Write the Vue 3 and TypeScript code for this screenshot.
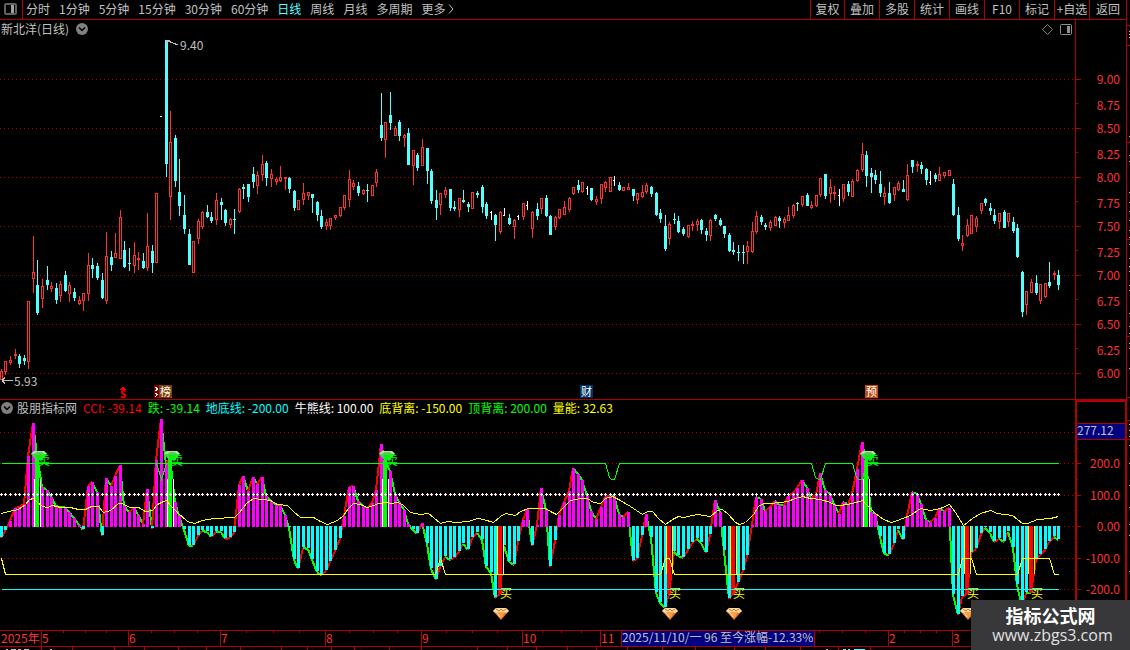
<script setup lang="ts">
interface Candle {
  x: number
  high: number
  top: number
  bottom: number
  low: number
  kind: string
}
interface Point {
  x: number
  y: number
}

const periods: string[] = ['分时', '1分钟', '5分钟', '15分钟', '30分钟', '60分钟', '日线', '周线', '月线', '多周期', '更多']
const tools: string[] = ['复权', '叠加', '多股', '统计', '画线', 'F10', '标记', '+自选', '返回']

// x, high, body top, body bottom, low, kind (r = up, c = down, w = flat)
const candleRows = `
1 369 371 380 380 r|5 361 361 372 375 r|10 356 360 363 365 r|15 349 354 356 359 r|19 354 356 364 368 c|24 355 358 361 365 c
28 301 301 362 369 r|33 236 272 279 293 r|37 260 285 313 315 c|42 279 286 299 308 r|47 266 280 285 290 c|51 282 286 289 292 r
56 283 288 300 304 c|60 281 284 296 302 r|65 271 275 291 292 c|69 282 285 294 302 r|74 288 292 298 301 c|79 296 300 304 305 r
83 293 293 301 311 r|88 253 265 294 301 r|92 258 265 269 278 c|97 263 266 278 280 c|102 273 280 298 299 c|106 232 256 301 304 r
111 251 257 265 271 c|115 233 253 258 258 r|120 210 217 259 259 r|124 241 250 267 268 c|129 248 263 264 271 c|134 242 255 266 273 r
138 252 258 260 270 r|143 253 261 268 269 c|147 213 246 268 271 r|152 245 251 263 273 c|156 193 193 263 263 r|161 116 116 117 117 w
166 40 40 164 177 c|170 111 142 197 220 r|175 135 138 181 187 c|179 159 192 206 216 c|184 195 215 229 234 c|189 229 234 265 265 c
193 241 241 273 273 r|198 219 221 239 244 r|202 211 212 227 229 r|207 205 212 217 218 c|211 212 217 221 223 c|216 193 200 220 225 r
221 198 202 205 220 c|225 209 210 223 226 c|230 218 219 225 228 r|234 209 219 220 234 c|239 188 189 212 213 r|243 184 187 189 199 c
248 184 184 197 202 c|253 167 174 182 188 c|257 171 175 186 194 r|262 155 164 175 181 r|266 161 163 178 186 c|271 169 174 179 187 r
276 177 179 182 185 r|280 166 177 181 182 r|285 177 177 179 190 r|289 177 178 189 193 c|294 190 191 208 211 c|298 200 200 210 210 r
303 183 193 200 205 r|308 192 192 196 200 r|312 194 194 198 213 c|317 201 202 215 221 c|321 210 216 227 229 c|326 219 222 226 230 r
330 218 218 226 230 r|335 215 215 218 220 r|340 207 207 216 217 r|344 195 195 208 210 r|349 170 179 200 207 r|353 180 183 187 190 r
358 182 186 193 196 c|363 189 190 194 195 r|367 184 190 191 202 c|372 185 185 196 196 r|376 169 172 183 187 r|381 93 125 138 141 c
385 122 122 140 158 r|390 92 115 123 130 c|395 126 128 136 136 r|399 120 122 136 141 c|404 134 135 138 147 r|408 128 133 165 165 c
413 150 150 166 185 r|417 153 155 168 171 c|422 139 147 166 166 r|427 148 148 171 184 c|431 169 171 201 204 c|436 190 200 208 220 c
440 193 193 205 215 r|445 187 190 195 198 r|450 189 189 208 211 c|454 201 207 209 211 c|459 198 198 210 217 r|463 190 200 202 203 c
468 202 204 207 212 c|472 192 192 209 209 r|477 191 193 195 198 c|482 185 187 207 213 c|486 202 204 216 219 c|491 211 212 213 220 w
495 214 215 225 241 c|500 211 212 232 234 r|504 208 215 216 216 w|509 214 218 224 225 c|514 219 220 227 239 r|518 215 216 217 220 w
523 203 203 217 220 r|527 201 205 206 210 w|532 211 212 229 238 r|537 203 209 216 220 c|541 198 198 209 214 r|546 195 198 216 217 c
550 215 216 235 235 c|555 216 217 227 230 r|559 209 209 218 219 r|564 201 207 215 215 r|569 197 198 210 212 r|573 187 187 194 195 r
578 180 185 190 193 c|582 182 182 192 193 r|587 186 188 189 195 w|591 188 188 200 201 c|596 196 199 202 205 r|601 184 184 199 204 r
605 181 182 188 192 r|610 177 177 192 192 r|614 176 180 181 186 w|619 182 185 190 191 c|623 187 187 191 191 r|628 183 187 190 190 r
633 189 189 196 201 c|637 193 193 200 204 r|642 185 192 197 198 r|646 183 185 192 194 r|651 186 187 194 197 c|656 192 193 215 216 c
660 209 213 219 223 c|665 215 226 249 251 c|669 222 224 239 245 r|674 213 219 220 224 c|678 216 221 232 233 c|683 227 229 234 236 c
688 225 225 237 238 r|692 221 224 226 231 r|697 219 221 225 231 r|701 219 220 230 234 c|706 228 231 235 241 c|710 219 220 236 241 r
715 214 215 219 221 c|720 218 220 225 226 c|724 226 226 234 238 c|729 233 235 251 252 c|733 242 250 252 255 c|738 245 252 253 261 c
743 245 252 253 264 c|747 241 246 252 264 r|752 222 231 252 253 r|756 211 216 232 234 r|761 215 217 222 225 c|765 223 225 227 230 c
770 220 222 228 231 r|775 216 217 226 226 r|779 216 218 221 228 c|784 217 219 223 228 r|788 207 215 221 221 r|793 204 205 216 218 r
797 202 203 204 211 c|802 196 196 205 207 r|807 193 195 206 206 c|811 201 205 208 209 r|816 195 195 206 207 r|820 178 178 195 197 r
825 174 174 196 199 c|830 179 187 194 203 r|834 186 192 194 200 r|839 189 195 196 206 w|843 184 184 199 202 r|848 181 184 192 196 c
852 179 181 197 197 r|857 169 170 181 182 r|862 143 154 170 172 r|866 151 155 176 187 c|871 168 173 177 193 c|875 170 175 180 184 c
880 171 184 193 197 c|884 187 193 197 205 r|889 182 193 203 204 c|894 187 187 195 201 r|898 181 183 190 191 r|903 180 189 192 192 c
907 164 175 200 201 r|912 160 160 167 173 c|917 161 164 166 172 r|921 162 165 169 174 c|926 168 169 180 185 c|930 171 182 183 185 w
935 173 175 179 182 c|939 167 174 181 181 r|944 172 172 176 178 r|949 170 170 176 176 r|953 179 184 215 216 c|958 207 215 239 241 c
962 235 243 246 251 r|967 219 225 236 237 r|971 215 215 234 234 r|976 216 218 227 232 r|981 203 203 211 214 r|985 198 199 203 206 c
990 203 208 211 215 c|994 209 215 221 224 c|999 213 213 222 229 r|1004 210 212 228 228 c|1008 213 213 222 227 r|1013 217 222 231 233 c
1017 224 228 257 258 c|1022 271 272 312 317 c|1026 291 291 305 315 r|1031 279 282 293 293 r|1036 275 283 293 295 c|1040 284 284 301 304 r
1045 283 283 297 298 r|1049 262 282 286 288 c|1054 271 273 275 280 r|1058 270 275 285 290 c`

const candles: Candle[] = candleRows
  .trim()
  .split(/[|\n]/)
  .map((row) => {
    const [x, high, top, bottom, low, kind] = row.split(' ')
    return { x: +x, high: +high, top: +top, bottom: +bottom, low: +low, kind }
  })

const parsePoints = (text: string): Point[] =>
  text
    .trim()
    .split(/\s+/)
    .map((pair) => {
      const [x, y] = pair.split(',').map(Number)
      return { x, y }
    })

const cci: Point[] = parsePoints(`
1,538 5,531 10,521 15,508 19,507 24,504 28,456 33,423 37,455 42,487 47,490 51,497 56,506 60,507 65,507 69,512 74,518 79,525
83,530 88,486 92,482 97,492 102,536 106,478 111,486 115,476 120,465 124,506 129,512 134,508 138,515 143,524 147,489 152,529
156,460 161,419 166,464 170,458 175,502 179,516 184,530 189,546 193,546 198,536 202,531 207,532 211,537 216,532 221,532
225,539 230,538 234,533 239,485 243,476 248,491 253,477 257,484 262,477 266,496 271,501 276,505 280,505 285,515 289,528
294,560 298,569 303,548 308,549 312,560 317,572 321,575 326,571 330,562 335,551 340,539 344,516 349,487 353,486 358,501
363,506 367,508 372,503 376,490 381,444 385,460 390,471 395,494 399,502 404,510 408,524 413,530 417,534 422,523 427,544
431,569 436,580 440,567 445,557 450,560 454,558 459,552 463,544 468,550 472,538 477,533 482,540 486,567 491,573 495,598
500,594 504,546 509,562 514,565 518,542 523,520 527,509 532,546 537,525 541,488 546,510 550,567 555,541 559,515 564,502
569,491 573,468 578,474 582,480 587,496 591,511 596,519 601,507 605,497 610,495 614,496 619,514 623,517 628,512 633,561
637,559 642,536 646,514 651,538 656,593 660,603 665,608 669,594 674,552 678,556 683,558 688,550 692,543 697,539 701,543
706,553 710,535 715,500 720,512 724,551 729,599 733,594 738,583 743,571 747,556 752,525 756,497 761,499 765,511 770,507
775,501 779,505 784,505 788,496 793,493 797,488 802,480 807,488 811,498 816,495 820,473 825,490 830,494 834,504 839,514
843,502 848,504 852,494 857,469 862,442 866,460 871,512 875,514 880,537 884,554 889,555 894,544 898,530 903,540 907,516
912,492 917,494 921,504 926,520 930,522 935,518 939,509 944,511 949,508 953,595 958,615 962,597 967,594 971,553 976,549
981,534 985,528 990,533 994,542 999,539 1004,542 1008,532 1013,548 1017,585 1022,607 1026,593 1031,593 1036,560 1040,555
1045,550 1049,542 1054,537 1058,540`)

const volume = `1,513 8,511 18,509 25,504 29,499 33,498 37,502 42,506 47,507 52,505 60,507 70,507 78,509 85,509 91,506 98,506 103,512
110,510 118,503 121,503 130,507 138,507 145,511 152,510 157,504 163,501 166,500 170,505 178,513 187,521 194,523 202,520 214,518
234,517 239,512 246,503 253,498 262,499 270,500 277,504 287,505 293,511 300,517 313,517 320,521 327,524 337,520 343,515 348,508
353,503 360,504 367,507 373,505 378,503 385,502 390,503 398,502 403,505 410,512 420,514 428,513 433,517 440,523 447,521 455,522
468,521 477,518 483,519 493,522 500,516 505,513 515,515 520,511 528,508 545,508 550,511 556,514 562,508 570,500 580,498 587,498
593,502 600,503 605,498 612,496 618,499 630,506 642,514 647,511 652,511 658,518 665,524 672,519 678,516 683,517 697,514 710,516
717,510 722,509 728,514 735,522 739,524 745,522 753,514 758,506 763,503 770,503 780,502 787,501 795,498 802,496 810,498 820,499
830,502 835,505 840,505 852,503 862,500 868,506 875,513 883,519 891,522 897,520 910,515 920,508 930,510 940,508 949,504 955,512
963,525 972,518 980,513 990,510 997,513 1012,515 1022,523 1027,523 1037,519 1050,518 1058,516`

const topLine = '1,463 605,463 609,477 611,479 614,479 619,463 811,463 815,477 818,479 820,479 825,463 852,463 856,477 858,479 862,479 866,463 1058,463'
const bottomLine = '1,558 5,574 435,574 440,558 445,574 660,574 665,558 669,558 674,574 958,574 962,558 971,558 976,574 1017,574 1022,558 1049,558 1054,574 1058,574'

const sells: number[] = [37, 170, 385, 866]
const buys: number[] = [500, 669, 733, 967, 1031]
const signals = new Set<number>([...sells, ...buys])
const bars = cci.filter((p) => !signals.has(p.x))
const segments = cci.slice(1).map((p, i) => ({ x1: cci[i].x, y1: cci[i].y, x2: p.x, y2: p.y, up: p.y < cci[i].y }))
const levelOf = (x: number): number => cci.find((p) => p.x === x)?.y ?? 526

const priceGrid: number[] = [79, 128, 177, 226, 275, 324, 373]
const cciGrid: number[] = [432, 463, 495, 526, 558, 589]
const prices = [
  ['9.00', 79], ['8.75', 105], ['8.50', 128], ['8.25', 154], ['8.00', 177], ['7.75', 203], ['7.50', 226],
  ['7.25', 252], ['7.00', 275], ['6.75', 301], ['6.50', 324], ['6.25', 350], ['6.00', 373],
] as [string, number][]
const levels = [['200.0', 463], ['100.0', 495], ['0.00', 526], ['-100.0', 558], ['-200.0', 589]] as [string, number][]

const readings = [
  { text: 'CCI: -39.14', tone: 'red' },
  { text: '跌: -39.14', tone: 'green' },
  { text: '地底线: -200.00', tone: 'aqua' },
  { text: '牛熊线: 100.00', tone: 'white' },
  { text: '底背离: -150.00', tone: 'yellow' },
  { text: '顶背离: 200.00', tone: 'green' },
  { text: '量能: 32.63', tone: 'yellow' },
]

const months = [['5', 41], ['6', 128], ['7', 220], ['8', 325], ['9', 421], ['10', 522], ['11', 600], ['2', 888], ['3', 952]] as [string, number][]
const minorTicks: number[] = [63, 85, 106, 151, 174, 197, 246, 273, 299, 349, 373, 397, 446, 472, 497, 542, 561, 581, 819, 842, 865, 904, 920, 936]
const lowerTicks: number[] = [41, 72, 114, 144, 178, 206, 240, 281, 307, 331, 354, 389, 421, 477, 507, 536, 567, 596, 627, 662, 695, 734, 765, 800, 838, 870]
const railLines: number[] = [25, 45, 142, 239, 336, 397, 420, 439]
const railDots: number[] = [31, 34, 37, 136, 155, 161, 192, 202, 211, 220, 230, 237, 244, 258, 266, 271, 285, 290, 313, 326, 333, 343, 348, 368, 424, 430, 436, 445, 463, 485, 507, 524, 535, 571]
</script>

<template>
  <div class="terminal">
    <main class="main">
      <nav class="toolbar">
        <button class="panel-toggle" aria-label="panel">
          <svg width="13" height="12" viewBox="0 0 13 12">
            <rect x="1" y="1" width="11" height="10" rx="1" fill="none" stroke="#606060" stroke-width="2" />
            <rect x="7" y="2" width="3" height="8" fill="#a0a0a0" />
          </svg>
        </button>
        <div class="periods">
          <button v-for="p in periods" :key="p" :class="{ active: p === '日线' }">
            {{ p }}<svg v-if="p === '更多'" class="more" width="6" height="10" viewBox="0 0 6 10"><path d="M1 0.5L5 5L1 9.5" fill="none" stroke="#c0c0c0" /></svg>
          </button>
        </div>
        <div class="tools">
          <button v-for="t in tools" :key="t">{{ t }}</button>
        </div>
      </nav>

      <header class="price-head">
        <div class="caption">
          <span>新北洋(日线)</span>
          <button aria-label="menu">
            <svg width="12" height="12" viewBox="0 0 12 12"><circle cx="6" cy="6" r="6" fill="#808080" /><path d="M3 4.5L6 7.5L9 4.5" fill="none" stroke="#000" stroke-width="1.5" /></svg>
          </button>
          <div class="corner">
            <button aria-label="diamond">
              <svg width="11" height="11" viewBox="0 0 11 11"><path d="M5.5 0.5L10.5 5.5L5.5 10.5L0.5 5.5Z" fill="none" stroke="#808080" /></svg>
            </button>
            <button aria-label="side panel">
              <svg width="12" height="11" viewBox="0 0 12 11">
                <rect x="0.5" y="0.5" width="11" height="10" rx="1" fill="none" stroke="#909090" />
                <rect x="7" y="2" width="3" height="7" fill="#909090" />
              </svg>
            </button>
          </div>
        </div>
        <div class="axis-cap"></div>
      </header>

      <svg class="chart" viewBox="0 38 1126 362" shape-rendering="crispEdges">
        <line v-for="y in priceGrid" :key="y" class="grid" x1="0" x2="1075" :y1="y + 0.5" :y2="y + 0.5" />
        <g v-for="c in candles" :key="c.x" :class="'candle-' + c.kind">
          <template v-if="c.kind === 'r'">
            <rect :x="c.x" :y="c.high" width="1" :height="c.top - c.high" />
            <rect :x="c.x - 1" :y="c.top" width="3" :height="c.bottom - c.top" />
            <rect v-if="c.bottom - c.top > 2" class="hollow" :x="c.x" :y="c.top + 1" width="1" :height="c.bottom - c.top - 2" />
            <rect :x="c.x" :y="c.bottom" width="1" :height="c.low - c.bottom" />
          </template>
          <template v-else>
            <rect :x="c.x" :y="c.high" width="1" :height="c.low - c.high" />
            <rect :x="c.x - 1" :y="c.top" :width="c.kind === 'w' ? 2 : 3" :height="c.bottom - c.top" />
          </template>
        </g>
        <path d="M166 40l4 0M166 40l0 4M168 41l10 4M2 380.5h11M2 380.5l3 -3M2 380.5l3 3" fill="none" stroke="#c0c0c0" />
        <text class="note" x="180" y="50">9.40</text>
        <text class="note" x="14" y="386">5.93</text>

        <path d="M119 390l4 -3l4 3z" fill="#f00" />
        <text class="dollar" x="123" y="398">S</text>
        <rect x="154" y="385" width="5" height="13" fill="#800000" />
        <path d="M155 387l3 2M155 391l3 -2M155 393l3 2M155 397l3 -3" stroke="#fff" fill="none" />
        <rect x="159" y="385" width="13" height="13" fill="#804000" />
        <rect x="580" y="385" width="13" height="13" fill="#003468" />
        <rect x="865" y="385" width="13" height="13" fill="#bc4a10" />
        <text class="tag" x="160" y="396">榜</text>
        <text class="tag" x="581" y="396">财</text>
        <text class="tag" x="866" y="396">预</text>

        <g class="rule">
          <rect x="1075" y="38" width="1" height="362" />
          <rect v-for="([label, y], i) in prices" :key="label" x="1076" :y="i % 2 ? y - 2 : y" :width="i % 2 ? 2 : 5" height="1" />
          <rect x="0" y="399" width="1126" height="1" />
        </g>
        <text v-for="[label, y] in prices" :key="label" class="scale" x="1120" :y="y + 5">{{ label }}</text>
      </svg>

      <header class="cci-head">
        <div class="caption">
          <button aria-label="indicator menu">
            <svg width="12" height="12" viewBox="0 0 12 12"><circle cx="6" cy="6" r="6" fill="#808080" /><path d="M3 4.5L6 7.5L9 4.5" fill="none" stroke="#000" stroke-width="1.5" /></svg>
          </button>
          <span>股朋指标网</span>
          <span v-for="r in readings" :key="r.text" :class="r.tone">{{ r.text }}</span>
        </div>
        <div class="axis-cap boxed"></div>
      </header>

      <svg class="chart" viewBox="0 418 1126 212" shape-rendering="crispEdges">
        <line v-for="y in cciGrid" :key="y" class="grid" x1="0" x2="1075" :y1="y + 0.5" :y2="y + 0.5" />
        <line v-for="s in segments" :key="s.x2" class="cci" :class="{ up: s.up }" :x1="s.x1" :y1="s.y1" :x2="s.x2" :y2="s.y2" />
        <rect
          v-for="b in bars"
          :key="b.x"
          :fill="b.y < 526 ? '#ff00ff' : '#00ffff'"
          :x="b.x - 1"
          :y="Math.min(b.y, 526)"
          width="3"
          :height="Math.abs(527 - b.y)"
        />
        <g v-for="x in sells" :key="x">
          <rect :x="x - 3" y="479" width="7" height="48" fill="#fff" />
          <rect :x="x - 2" y="479" width="5" height="48" fill="#000" />
          <rect :x="x - 2" :y="levelOf(x)" width="4" :height="527 - levelOf(x)" fill="#00ff00" />
        </g>
        <g v-for="x in buys" :key="x">
          <rect :x="x - 3" y="526" width="7" height="48" fill="#ffff00" />
          <rect :x="x - 2" y="526" width="5" height="48" fill="#000" />
          <rect :x="x - 2" y="526" width="4" :height="levelOf(x) - 526" fill="#ff0000" />
        </g>
        <g transform="translate(0.5 0.5)" fill="none">
          <polyline points="1,589 1058,589" stroke="#00ffff" />
          <polyline :points="topLine" stroke="#00ff00" />
          <polyline points="156,463 161,479 166,463" stroke="#00ff00" />
          <polyline :points="bottomLine" stroke="#ffff00" />
          <polyline :points="volume" stroke="#ffff00" />
        </g>
        <g fill="#fff">
          <template v-for="c in cci" :key="c.x">
            <rect :x="c.x - 1" y="494" width="3" height="1" />
            <rect :x="c.x" y="493" width="1" height="3" />
          </template>
        </g>
        <g v-for="x in sells" :key="x" shape-rendering="auto">
          <g :transform="`translate(${x + 2} 451)`">
            <path d="M-8 3L-5 0H5L8 3L3 9H-3Z" fill="#48d048" />
            <path d="M-8 3L-5 0H5L8 3Z" fill="#a8e8a0" />
            <path d="M-5 3L-2 1H3L5 3Z" fill="#60c860" />
            <path d="M-3 4H4L2 9H-2Z" fill="#00ee10" />
          </g>
          <text class="mark sell" :x="x + 1" y="465">卖</text>
        </g>
        <g v-for="x in buys" :key="x" shape-rendering="auto">
          <text class="mark buy" :x="x" y="598">买</text>
          <g :transform="`translate(${x + 1} 608)`">
            <path d="M-8 3L-5 0H5L8 3L0 12Z" fill="#d87828" />
            <path d="M-8 3L-5 0H5L8 3L5 5H-5Z" fill="#ffd8a0" />
            <path d="M-4 4H4L0 11Z" fill="#ff9c40" />
            <path d="M-5 1L-2 3L0 1L2 3L5 1" fill="none" stroke="#c07838" />
            <path d="M-4 5L-1 9" stroke="#fff0d0" fill="none" />
          </g>
        </g>

        <g class="rule">
          <rect x="1075" y="418" width="2" height="212" />
          <rect x="1125" y="418" width="1" height="212" />
          <rect x="1077" y="423" width="48" height="17" />
          <rect v-for="[label, y] in levels" :key="label" x="1077" :y="y" width="4" height="1" />
          <rect v-for="y in [448, 479, 510, 542, 573, 604]" :key="y" x="1077" :y="y" width="1" height="1" />
        </g>
        <rect x="1077" y="424" width="48" height="15" fill="#000080" />
        <text class="note" x="1077" y="435">277.12</text>
        <text v-for="[label, y] in levels" :key="label" class="scale" x="1120" :y="y + 5">{{ label }}</text>
      </svg>

      <svg class="chart" viewBox="0 630 1126 20" shape-rendering="crispEdges">
        <g class="rule">
          <rect x="0" y="630" width="1126" height="1" />
          <rect x="0" y="646" width="1126" height="1" />
          <rect v-for="[label, x] in months" :key="label" :x="x" y="630" width="1" height="16" />
          <rect v-for="x in minorTicks" :key="x" :x="x" y="631" width="1" height="2" />
          <rect v-for="x in lowerTicks" :key="x" :x="x" y="647" width="1" height="3" />
          <rect x="621" y="630" width="194" height="17" />
        </g>
        <text class="month" x="1" y="643">2025年</text>
        <text v-for="[label, x] in months" :key="label" class="month" :x="x + 1" y="643">{{ label }}</text>
        <rect x="622" y="631" width="192" height="15" fill="#000080" />
        <text class="note" x="622" y="642">2025/11/10/一 96 至今涨幅-12.33%</text>
        <path d="M6 649.5h2M11 649.5h5M18 649.5h3M24 649.5h5M50 649.5h2M826 649.5h2" stroke="#c0c0c0" />
        <path d="M843 649.5h3M848 649.5h2M854 649.5h11" stroke="#54ffff" />
      </svg>
    </main>

    <aside class="rail">
      <svg width="3" height="650" viewBox="0 0 3 650" shape-rendering="crispEdges">
        <rect v-for="y in railLines" :key="y" class="rail-line" x="0" :y="y" width="3" height="1" />
        <rect v-for="y in railDots" :key="y" x="2" :y="y" width="1" height="1" fill="#c0c0c0" />
      </svg>
    </aside>

    <footer class="site">
      <strong>指标公式网</strong>
      <span>www.zbgs3.com</span>
    </footer>
  </div>
</template>

<style>
body {
  background: #000;
}
</style>

<style scoped>
.terminal {
  position: relative;
  display: flex;
  background: #000;
  color: #c0c0c0;
  font: 12px/16px 'Noto Sans CJK SC', sans-serif;
  overflow: hidden;
}
.main {
  flex: 1;
  min-width: 0;
}
button {
  display: flex;
  align-items: center;
  justify-content: center;
  padding: 0;
  border: 0;
  background: none;
  color: inherit;
  font: inherit;
  white-space: nowrap;
}
.toolbar {
  display: flex;
  height: 19px;
  border-bottom: 1px solid #b00000;
}
.panel-toggle {
  width: 23px;
  padding: 0 2px 2px 0;
  box-sizing: border-box;
  border-right: 1px solid #b00000;
}
.periods {
  display: flex;
  gap: 9px;
  padding-left: 3px;
}
.periods button,
.tools button {
  padding-bottom: 2px;
}
.active {
  color: #54ffff;
}
.more {
  margin-left: 3px;
}
.tools {
  display: grid;
  grid-template-columns: 34px repeat(7, 35px) 37px;
  margin-left: auto;
}
.tools button {
  border-left: 1px solid #b00000;
}
.price-head,
.cci-head {
  display: flex;
  height: 18px;
}
.caption {
  flex: 1;
  display: flex;
  align-items: center;
  gap: 7px;
  padding-left: 1px;
  white-space: nowrap;
}
.corner {
  display: flex;
  gap: 7px;
  margin-left: auto;
  padding-right: 3px;
}
.axis-cap {
  width: 50px;
  border-left: 1px solid #b00000;
}
.boxed {
  width: 48px;
  border: solid #b00000;
  border-width: 2px 1px 0 2px;
}
.cci-head .caption {
  gap: 6px;
  padding-bottom: 2px;
}
.cci-head .caption button {
  margin-right: -2px;
}
.red {
  color: #ff0000;
}
.green {
  color: #00ff00;
}
.aqua {
  color: #00ffff;
}
.white {
  color: #ffffff;
}
.yellow {
  color: #ffff00;
}
.chart {
  display: block;
  width: 100%;
  height: auto;
  overflow: visible;
}
.grid {
  stroke: #b00000;
  stroke-dasharray: 1 3;
}
.rule,
.rail-line {
  fill: #b00000;
}
.candle-r {
  fill: #ff3232;
}
.candle-c {
  fill: #54ffff;
}
.candle-w {
  fill: #ffffff;
}
.hollow {
  fill: #000000;
}
.note {
  fill: #c0c0c0;
}
.scale {
  fill: #ff3232;
  text-anchor: end;
}
.month {
  fill: #ff3232;
}
.tag {
  fill: #ffffff;
  font-size: 11px;
}
.dollar {
  fill: #ff0000;
  font-size: 10px;
  font-weight: 700;
  text-anchor: middle;
}
.mark {
  font-size: 12px;
}
.sell {
  fill: #00ff00;
}
.buy {
  fill: #ffff00;
}
.cci {
  stroke: #00ff00;
  stroke-width: 2;
}
.cci.up {
  stroke: #ff0000;
}
.rail {
  width: 3px;
  border-left: 1px solid #b00000;
}
.rail svg {
  display: block;
}
.site {
  position: absolute;
  right: 0;
  bottom: 0;
  display: flex;
  flex-direction: column;
  align-items: center;
  justify-content: center;
  width: 159px;
  height: 50px;
  background: #38383a;
  color: #ffffff;
  line-height: 20px;
}
.site strong {
  font-size: 18px;
}
.site span {
  padding-left: 4px;
  font: 16px/20px 'Open Sans', sans-serif;
  color: #e0e0e0;
}
</style>
